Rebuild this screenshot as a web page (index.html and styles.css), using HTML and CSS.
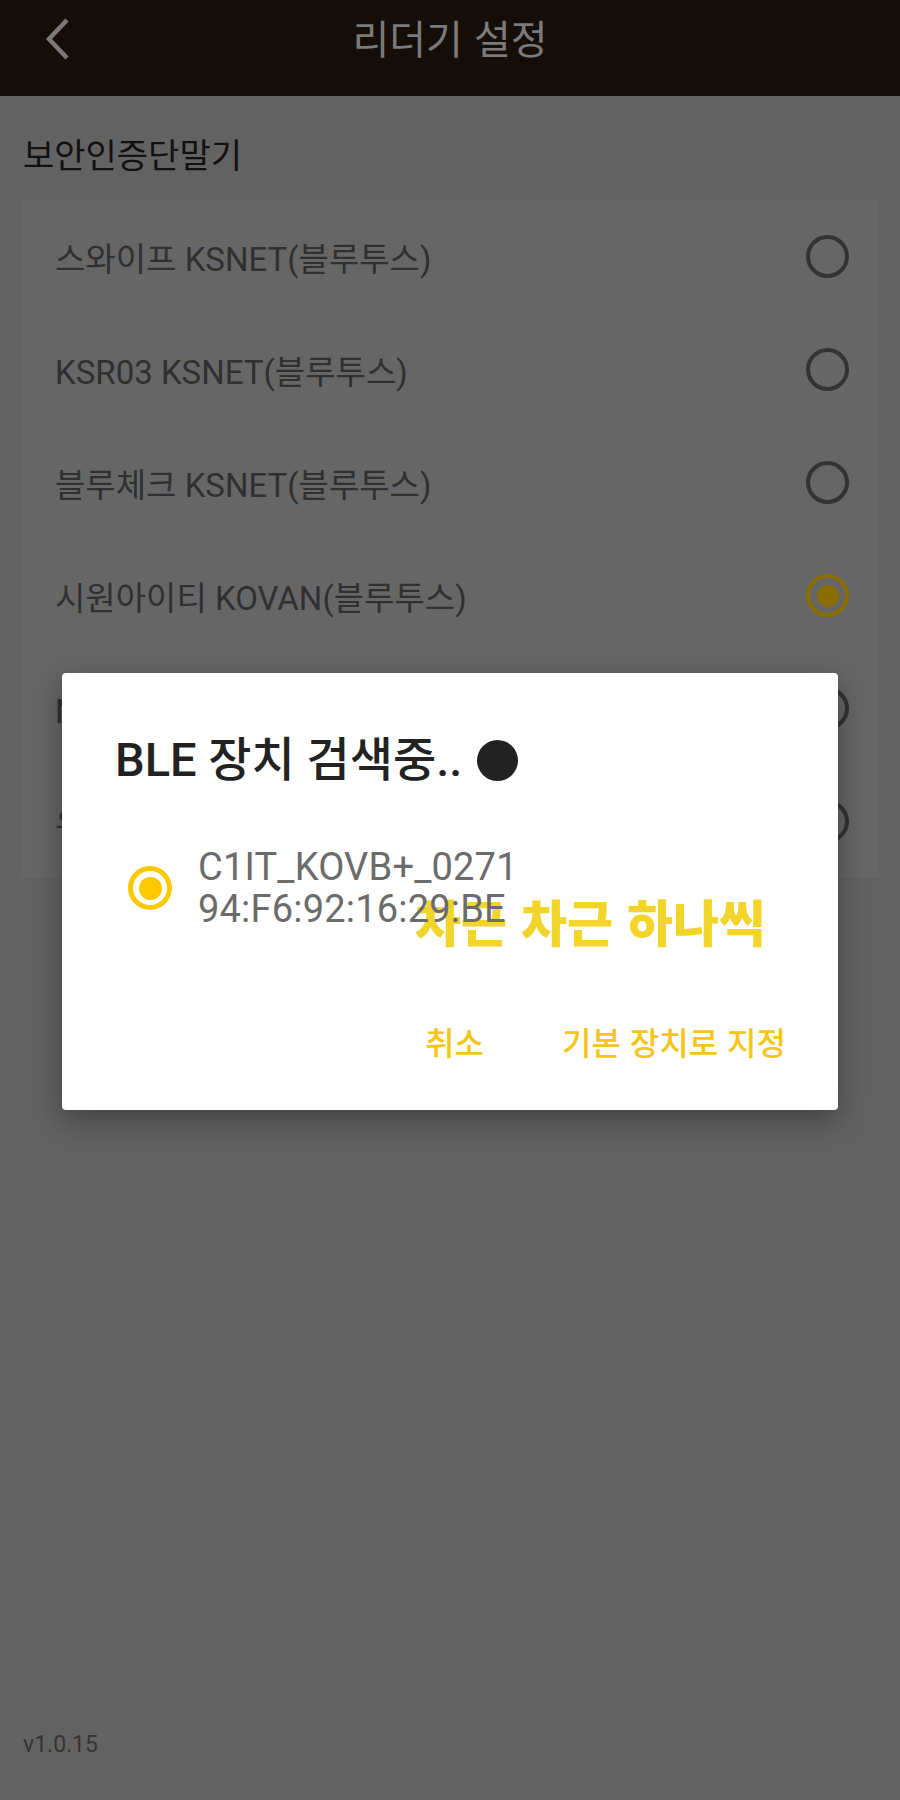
FILE: index.html
```html
<!DOCTYPE html>
<html lang="ko">
<head>
<meta charset="utf-8">
<title>리더기 설정</title>
<link rel="stylesheet" href="styles.css">
</head>
<body>
<div class="app">
  <header class="topbar">
    <div class="back">
      <svg width="30" height="44" viewBox="0 0 30 44"><polyline points="25,3 7,22 25,41" fill="none" stroke="#7a7a7a" stroke-width="4.5"/></svg>
    </div>
    <h1 class="title">리더기 설정</h1>
    <div class="spacer"></div>
  </header>

  <div class="section-label">보안인증단말기</div>

  <div class="card">
    <div class="row"><span class="row-text">스와이프 KSNET(블루투스)</span><span class="radio"></span></div>
    <div class="row"><span class="row-text">KSR03 KSNET(블루투스)</span><span class="radio"></span></div>
    <div class="row"><span class="row-text">블루체크 KSNET(블루투스)</span><span class="radio"></span></div>
    <div class="row"><span class="row-text">시원아이티 KOVAN(블루투스)</span><span class="radio checked"></span></div>
    <div class="row"><span class="row-text">NICE(블루투스)</span><span class="radio"></span></div>
    <div class="row"><span class="row-text">유선 단말기</span><span class="radio"></span></div>
  </div>

  <div class="version">v1.0.15</div>

  <div class="dialog">
    <div class="dlg-title">BLE 장치 검색중..<span class="dot"></span></div>
    <div class="device">
      <span class="dradio"></span>
      <div class="device-text">
        <div>C1IT_KOVB+_0271</div>
        <div>94:F6:92:16:29:BE</div>
      </div>
    </div>
    <div class="actions">
      <span class="btn">취소</span>
      <span class="btn">기본 장치로 지정</span>
    </div>
    <div class="watermark">차근 차근 하나씩</div>
  </div>
</div>
</body>
</html>
```

FILE: styles.css
```css
* { box-sizing: border-box; }
html, body { margin: 0; padding: 0; }
body {
  width: 900px;
  height: 1800px;
  background: #626262;
  font-family: Roboto, "Noto Sans CJK KR", sans-serif;
  overflow: hidden;
}
.app {
  position: relative;
  width: 900px;
  height: 1800px;
  display: flex;
  flex-direction: column;
}
.topbar {
  height: 96px;
  background: #150e08;
  display: grid;
  grid-template-columns: 96px 1fr 96px;
  align-items: center;
}
.back {
  display: flex;
  justify-content: center;
  padding-left: 18px;
  margin-top: -18px;
}
.back svg { display: block; }
.title {
  margin: 0;
  margin-top: -22px;
  text-align: center;
  color: #7a7a7a;
  font-family: "Noto Sans CJK KR", sans-serif;
  font-weight: 400;
  font-size: 40px;
  line-height: 48px;
}
.section-label {
  margin-top: 37px;
  padding-left: 23px;
  font-family: "Noto Sans CJK KR", sans-serif;
  font-size: 34px;
  line-height: 42px;
  color: #111;
}
.card {
  margin: 25px 21px 0 21px;
  background: #666666;
  display: flex;
  flex-direction: column;
}
.row {
  height: 113px;
  display: flex;
  align-items: center;
  justify-content: space-between;
  padding: 0 30px 0 34px;
}
.row-text {
  font-size: 33px;
  color: #303030;
}
.radio {
  width: 43px;
  height: 43px;
  border: 4px solid #333;
  border-radius: 50%;
  display: flex;
  align-items: center;
  justify-content: center;
}
.radio.checked { border-color: #8a6f00; }
.radio.checked::after {
  content: "";
  width: 22px;
  height: 22px;
  border-radius: 50%;
  background: #8a6f00;
}
.version {
  margin-top: auto;
  margin-bottom: 42px;
  padding-left: 23px;
  font-size: 23px;
  color: #353535;
}
.dialog {
  position: absolute;
  left: 62px;
  top: 673px;
  width: 776px;
  height: 437px;
  background: #fff;
  border-radius: 4px;
  box-shadow: 0 10px 30px rgba(0,0,0,0.35);
  padding: 61px 52px 0 53px;
  display: flex;
  flex-direction: column;
}
.dlg-title {
  font-size: 47px;
  line-height: 52px;
  font-weight: 500;
  color: #222;
  display: flex;
  align-items: center;
  white-space: pre;
}
.dot {
  display: inline-block;
  width: 41px;
  height: 41px;
  border-radius: 50%;
  background: #222;
  margin-left: 15px;
}
.device {
  margin-top: 60px;
  display: flex;
  align-items: center;
  margin-left: 13px;
  position: relative;
  z-index: 2;
}
.dradio {
  width: 44px;
  height: 44px;
  border: 5px solid #fcc900;
  border-radius: 50%;
  display: flex;
  align-items: center;
  justify-content: center;
}
.dradio::after {
  content: "";
  width: 23px;
  height: 23px;
  border-radius: 50%;
  background: #fcc900;
}
.device-text {
  margin-left: 26px;
  font-size: 38px;
  line-height: 42px;
  letter-spacing: 0.2px;
  color: #6b6b6b;
}
.actions {
  margin-top: 91px;
  display: flex;
  justify-content: flex-end;
  gap: 78px;
}
.btn {
  font-family: "Noto Sans CJK KR", sans-serif;
  font-size: 32px;
  line-height: 40px;
  font-weight: 500;
  color: #f5c518;
}
.watermark {
  position: absolute;
  left: 353px;
  top: 221px;
  font-family: "Noto Sans CJK KR", sans-serif;
  font-size: 50px;
  line-height: 52px;
  font-weight: 900;
  color: #f3d42a;
  text-shadow: 0 0 2px #fff, 0 0 2px #fff;
  white-space: nowrap;
  z-index: 1;
}
```
